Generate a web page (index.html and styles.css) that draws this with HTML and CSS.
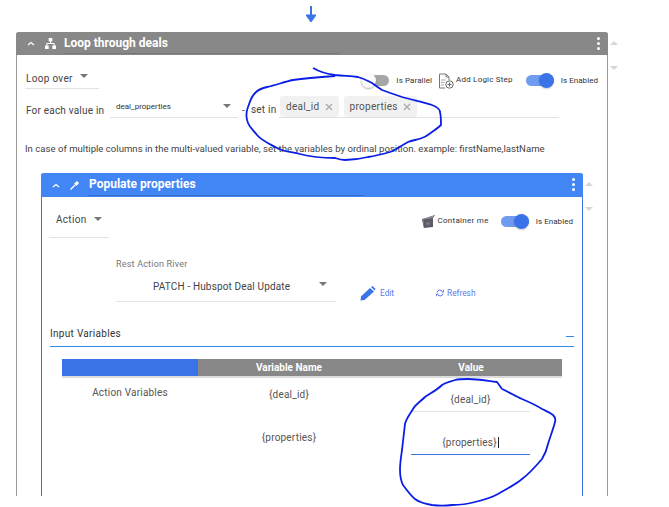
FILE: index.html
```html
<!DOCTYPE html>
<html lang="en">
<head>
<meta charset="utf-8">
<title>Loop through deals</title>
<link rel="stylesheet" href="styles.css">
</head>
<body>
<div class="page">
  <div class="drop-arrow">
    <svg width="10" height="16" viewBox="0 0 10 16"><path d="M5 0V13M1 9.500L5 15L9 9.500Z" fill="#3a73e8" stroke="#3a73e8" stroke-width="2"/></svg>
  </div>
  <div class="step-row outer-row">
    <section class="panel panel-gray">
      <header class="panel-head head-gray">
        <svg class="chev" width="8" height="5" viewBox="0 0 8 5"><path d="M1 4L4 1.500L7 4" fill="none" stroke="#fff" stroke-width="1.300"/></svg>
        <svg class="type-icon" width="11" height="11" viewBox="0 0 11 11"><path d="M3.700 0H7.300V3.400H3.700ZM0 7.400H3.700V11H0ZM7.300 7.400H11V11H7.300Z" fill="#fff"/><path d="M5.500 3V5.500M1.800 8V5.500H9.200V8" fill="none" stroke="#fff"/></svg>
        <h2 class="panel-title">Loop through deals</h2>
        <span class="title-rule rule-a"></span>
        <span class="dots"><i></i><i></i><i></i></span>
      </header>
      <div class="panel-body">
        <div class="loop-top">
          <div class="select select-loop"><span>Loop over</span><b class="caret"></b></div>
          <div class="tools">
            <span class="toggle off"><i></i></span>
            <span class="lbl lbl-par">Is Parallel</span>
            <svg class="add-icon" width="16" height="16" viewBox="0 0 16 16"><path d="M1.500 1H8L11 4V7M8 1V4H11M1.500 1V15H7" fill="none" stroke="#777" stroke-width="1"/><path d="M3 7H8M3 9.500H6.500M3 12H6" stroke="#aaa" fill="none"/><circle cx="11.500" cy="11.500" r="3.700" fill="#fff" stroke="#666"/><path d="M9.500 11.500H13.500M11.500 9.500V13.500" stroke="#666"/></svg>
            <span class="lbl lbl-add">Add Logic Step</span>
            <span class="toggle on"><i></i></span>
            <span class="lbl">Is Enabled</span>
          </div>
        </div>
        <div class="loop-line">
          <span class="each">For each value in</span>
          <div class="select select-each"><span>deal_properties</span><b class="caret"></b></div>
          <span class="dash">-</span>
          <div class="chips-field">
            <span class="set-in">set in</span>
            <span class="chip">deal_id<svg class="x" width="8" height="8" viewBox="0 0 8 8"><path d="M1 1L7 7M7 1L1 7" stroke="#aaa" stroke-width="1.300"/></svg></span>
            <span class="chip">properties<svg class="x" width="8" height="8" viewBox="0 0 8 8"><path d="M1 1L7 7M7 1L1 7" stroke="#aaa" stroke-width="1.300"/></svg></span>
          </div>
        </div>
        <p class="note">In case of multiple columns in the multi-valued variable, set the variables by ordinal position. example: firstName,lastName</p>

        <div class="step-row inner-row">
          <section class="panel panel-blue">
            <header class="panel-head head-blue">
              <svg class="chev" width="8" height="5" viewBox="0 0 8 5"><path d="M1 4L4 1.500L7 4" fill="none" stroke="#fff" stroke-width="1.300"/></svg>
              <svg class="type-icon" width="10" height="10" viewBox="0 0 10 10"><path d="M0.500 9.500L5 5" stroke="#fff" stroke-width="1.200"/><path d="M4 3.500L6.500 6L9 3L7 1Z" fill="#fff"/></svg>
              <h2 class="panel-title">Populate properties</h2>
              <span class="title-rule rule-b"></span>
              <span class="dots"><i></i><i></i><i></i></span>
            </header>
            <div class="inner-body">
              <div class="action-top">
                <div class="select select-action"><span>Action</span><b class="caret"></b></div>
                <div class="tools">
                  <svg class="box-icon" width="13" height="13" viewBox="0 0 13 13"><path d="M0 4L4 3L13 0L11 3V12L2 13Z" fill="#5c5c66"/><path d="M4 3L13 0L11 3L2 4.500Z" fill="#8d8d96"/><path d="M2 4.500L0 4L2 13Z" fill="#77777f"/><path d="M4 7H8V10H4Z" fill="#73737c"/></svg>
                  <span class="lbl lbl-con">Container me</span>
                  <span class="toggle on"><i></i></span>
                  <span class="lbl">Is Enabled</span>
                </div>
              </div>
              <div class="river">
                <div class="river-main">
                  <label class="river-label">Rest Action River</label>
                  <div class="select select-river"><span>PATCH - Hubspot Deal Update</span><b class="caret"></b></div>
                </div>
                <div class="river-links">
                  <svg class="pencil" width="16" height="15" viewBox="0 0 16 15"><path d="M0.500 14.500L1 10.500L10 2L14 5.500L4.500 14Z" fill="#3a73e8"/><path d="M11 1L12.500 0L15.500 2.800L14.700 4.500Z" fill="#3a73e8"/></svg>
                  <a class="link link-edit">Edit</a>
                  <svg class="refresh" width="8" height="8" viewBox="0 0 8 8"><path d="M1 3.500A3 3 0 0 1 6.500 2.500M7 4.500A3 3 0 0 1 1.500 5.500" fill="none" stroke="#4f6fe0" stroke-width="1"/><path d="M5.300 3H7.500V0.800M2.700 5H0.500V7.200" fill="none" stroke="#4f6fe0" stroke-width=".8"/></svg>
                  <a class="link">Refresh</a>
                </div>
              </div>
              <div class="section-head">
                <span>Input Variables</span>
                <i class="minus"></i>
              </div>
              <div class="vars">
                <div class="vars-head">
                  <div class="vh-blue"></div>
                  <div class="vh-gray">Variable Name</div>
                  <div class="vh-gray">Value</div>
                </div>
                <div class="vars-body">
                  <div class="vars-group">Action Variables</div>
                  <div class="vars-names">
                    <div class="var-name">{deal_id}</div>
                    <div class="var-name">{properties}</div>
                  </div>
                  <div class="vars-values">
                    <div class="val-input">{deal_id}</div>
                    <div class="val-input active"><span class="typed">{properties}</span></div>
                  </div>
                </div>
              </div>
            </div>
          </section>
          <div class="side-arrows side-inner"><b class="up"></b><b class="down"></b></div>
        </div>
      </div>
    </section>
    <div class="side-arrows side-outer"><b class="up"></b><b class="down"></b></div>
  </div>
</div>
<svg class="scribbles" width="669" height="507" viewBox="0 0 669 507">
  <path d="M313 68C320 72 327 74 335 75C345 76 350 76 358 77C365 79 368 81 372 83C376 86 379 88 382 90C390 93 396 95 402 97C412 100 423 102 432 105C437 107 440 109 440 112C441 116 441 121 441 125C438 128 435 130 432 132C429 134 426 137 422 138C417 140 413 140 408 142C402 145 396 150 390 152C383 154 375 156 368 157C360 159 352 160 345 160C341 160 338 159 335 158C323 158 311 157 300 154C292 152 284 152 277 148C270 144 262 141 257 135C253 130 250 128 248 123C246 118 246 112 248 107C250 102 251 97 255 93C258 90 262 88 267 87C276 85 284 82 293 80C307 78 321 77 335 76" fill="none" stroke="#0a1ee6" stroke-width="1.800"/>
  <path d="M502 389L497 382C488 381 478 379 468 379C463 379 459 379 455 380C450 382 446 382 442 385C437 390 431 393 425 397C421 401 416 404 413 409C410 414 406 419 405 424C404 433 403 441 402 450C401 457 400 463 400 470C400 476 401 481 403 485C407 490 410 495 415 499C420 503 426 504 432 505C439 506 445 506 452 505C460 505 468 504 475 502C483 500 491 498 498 494C506 489 515 485 522 479C529 474 536 466 542 459C545 454 547 449 548 444C550 437 553 430 555 422C556 419 555 417 553 415C549 412 546 411 542 409C536 405 529 402 522 399C515 396 509 392 502 389" fill="none" stroke="#0a1ee6" stroke-width="1.800"/>
</svg>
</body>
</html>
```

FILE: styles.css
```css
* { box-sizing: border-box; }
html, body { margin: 0; padding: 0; background: #fff; }
body {
  width: 669px;
  height: 507px;
  overflow: hidden;
  position: relative;
  font-family: Roboto, "Liberation Sans", sans-serif;
  font-size: 10px;
  color: #444;
}
.page { height: 496px; overflow: hidden; padding-left: 16px; }
.drop-arrow { height: 32px; padding: 6px 0 0 290px; line-height: 0; }
.step-row { display: flex; align-items: flex-start; }
.outer-row { width: 603px; }

.panel { flex: none; border-radius: 3px 3px 0 0; }
.panel-gray { width: 592px; height: 700px; border-left: 1px solid #999; border-right: 1px solid #999; }
.panel-blue { width: 542px; height: 500px; border-left: 1px solid #3a73e8; border-right: 1px solid #3a73e8; }

.panel-head { position: relative; display: flex; align-items: center; margin: 0 -1px; color: #fff; border-radius: 3px 3px 0 0; }
.head-gray { height: 23px; background: #888; }
.head-blue { height: 24px; background: #4285f4; }
.chev { margin-left: 11px; }
.head-gray .type-icon { margin-left: 10px; }
.head-blue .type-icon { margin-left: 10px; }
.panel-title { margin: -1px 0 0 8px; font-size: 12px; font-weight: 700; color: #fff; line-height: 1; }
.head-blue .panel-title { margin: -2px 0 0 9px; }
.title-rule { position: absolute; left: 47px; bottom: 1px; height: 1px; background: #777; }
.rule-a { width: 276px; }
.rule-b { left: 47px; width: 276px; background: #3a6cc8; bottom: 1px; }
.dots { position: absolute; right: 8px; top: 5px; display: flex; flex-direction: column; gap: 2px; }
.dots i { width: 3px; height: 3px; border-radius: 50%; background: #fff; }

.panel-body { padding: 0 0 0 8px; }
.select { position: relative; display: flex; align-items: center; border-bottom: 1px solid #e2e2e2; color: #444; }
.caret { position: absolute; width: 0; height: 0; border-left: 4px solid transparent; border-right: 4px solid transparent; border-top: 4px solid #777; }

.loop-top { display: flex; justify-content: space-between; height: 34px; padding-right: 9px; }
.select-loop { width: 74px; height: 34px; padding: 0 0 0 1px; font-size: 10px; letter-spacing: .3px; }
.select-loop span { margin-top: 14px; }
.select-loop .caret { left: 55px; top: 19px; }
.tools { display: flex; align-items: center; height: 16px; margin-top: 17px; }
.lbl { font-size: 8px; letter-spacing: .05px; color: #333; white-space: nowrap; }
.toggle { position: relative; display: block; width: 28px; height: 11px; border-radius: 6px; flex: none; }
.toggle i { position: absolute; top: -2px; width: 15px; height: 15px; border-radius: 50%; }
.toggle.off { width: 28px; background: #a6a6a6; }
.toggle.off i { left: 0; background: #fbfbfb; box-shadow: 0 1px 2px rgba(0,0,0,.3); }
.toggle.on { background: #6f9bf0; }
.toggle.on i { right: 0; background: #3a73e8; box-shadow: 0 1px 2px rgba(0,0,0,.2); }
.lbl-par { margin: 0 6px 0 7px; letter-spacing: .1px; }
.add-icon { margin-right: 1px; margin-top: 1px; }
.lbl-add { margin: -2px 13px 0 1px; letter-spacing: .2px; }
.tools .toggle + .lbl:last-child { margin-left: 7px; }

.loop-line { display: flex; align-items: flex-end; height: 29px; }
.each { width: 85px; padding-left: 1px; margin-bottom: 2px; letter-spacing: .2px; }
.select-each { width: 128px; height: 22px; padding-left: 6px; font-size: 8px; color: #333; }
.select-each span { margin-top: -1px; }
.select-each .caret { left: 113px; top: 8px; }
.dash { margin: 0 0 2px 4px; width: 36px; }
.chips-field { display: flex; align-items: center; gap: 5px; width: 280px; height: 22px; margin-left: 1px; border-bottom: 1px solid #e2e2e2; padding-left: 1px; position: relative; }
.set-in { position: absolute; left: -28px; top: 8px; letter-spacing: .2px; }
.chip { display: flex; align-items: center; gap: 5px; height: 21px; padding: 0 6px; background: #f1f1f1; border-radius: 3px; font-size: 10px; letter-spacing: .3px; color: #555; }
.x { margin-top: 1px; }
.note { margin: 25px 0 0; height: 11px; line-height: 11px; font-size: 9.600px; white-space: nowrap; color: #444; }

.inner-row { margin: 19px 0 0 16px; width: 560px; }
.inner-body { padding: 0 7px 0 7px; }
.action-top { display: flex; justify-content: space-between; height: 41px; }
.select-action { width: 60px; height: 41px; padding-left: 7px; font-size: 10px; letter-spacing: .3px; }
.select-action span { margin-top: 4px; }
.select-action .caret { left: 45px; top: 20px; }
.action-top .tools { margin-top: 16px; padding-right: 2px; }
.box-icon { margin-right: 2px; }
.lbl-con { margin: -2px 12px 0 0; letter-spacing: .3px; }
.river { display: flex; height: 68px; padding-left: 67px; }
.river-main { width: 220px; }
.river-label { display: block; margin-top: 21px; height: 11px; line-height: 11px; font-size: 9px; letter-spacing: .2px; color: #777; }
.select-river { width: 220px; height: 32px; padding-left: 37px; margin-top: 0; font-size: 10px; letter-spacing: .15px; }
.select-river span { margin-top: 2px; }
.select-river .caret { left: 203px; top: 12px; }
.river-links { display: flex; align-items: center; height: 16px; margin: 47px 0 0 24px; }
.pencil { margin-right: 4px; }
.link { font-size: 8.300px; color: #5a7be6; }
.link-edit { margin-right: 42px; }
.refresh { margin-right: 3px; }
.section-head { position: relative; display: flex; align-items: center; height: 41px; width: 524px; margin-left: 1px; border-bottom: 1px solid #2b8be6; color: #444; font-size: 10px; letter-spacing: .3px; }
.section-head span { margin-top: 14px; color: #333; }
.minus { position: absolute; right: 0; top: 30px; width: 8px; height: 1px; background: #2b8be6; }
.vars { width: 500px; margin: 12px 0 0 13px; }
.vars-head { display: grid; grid-template-columns: 136px 182px 182px; height: 19px; border-bottom: 2px solid #ddd; }
.vh-blue { background: #3a73e8; }
.vh-gray { background: #888; color: #fff; font-size: 10px; font-weight: 700; text-align: center; line-height: 17px; }
.vars-body { display: grid; grid-template-columns: 136px 182px 182px; color: #555; font-size: 10px; letter-spacing: .2px; text-align: center; }
.vars-group { padding-top: 9px; }
.var-name { height: 43px; padding-top: 11px; }
.vars-values { padding: 0 32px 0 31px; }
.val-input { height: 43px; padding-top: 16px; border-bottom: 1px solid #e2e2e2; }
.vars-values .val-input:first-child { height: 34px; }
.val-input.active { height: 43px; padding-top: 25px; border-bottom-color: #3a73e8; }
.typed { border-right: 1px solid #222; padding-right: 1px; }

.side-arrows { flex: none; position: relative; width: 10px; }
.side-outer { margin-left: 1px; height: 60px; }
.side-inner { margin-left: 1px; height: 60px; }
.up, .down { position: absolute; left: 1px; width: 0; height: 0; border-left: 4px solid transparent; border-right: 4px solid transparent; }
.up { border-bottom: 4px solid #d6d6d6; top: 9px; }
.down { border-top: 4px solid #d6d6d6; top: 34px; }
.scribbles { position: absolute; left: 0; top: 0; pointer-events: none; }
```
